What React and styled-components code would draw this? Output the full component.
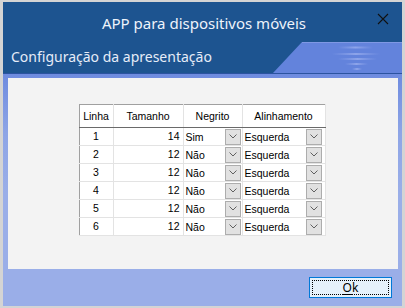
import React from "react";
import styled, { createGlobalStyle } from "styled-components";

const Global = createGlobalStyle`
  html, body { margin: 0; padding: 0; background: #ffffff; }
  * { box-sizing: border-box; }
`;

const Window = styled.div`
  width: 405px;
  height: 308px;
  display: flex;
  flex-direction: column;
  border-style: solid;
  border-color: #d4d4d4;
  border-width: 2px 3px 2px 3px;
  background: #1d5490;
  font-family: "Noto Sans", "Open Sans", sans-serif;
`;

const TitleBar = styled.div`
  height: 40px;
  display: grid;
  grid-template-columns: 1fr auto 1fr;
  align-items: center;
  background: #1d5490;
  color: #eef3fb;
  font-size: 15px;
`;

const TitleText = styled.div`
  grid-column: 2;
  padding-top: 1px;
  padding-left: 3px;
`;

const CloseButton = styled.div`
  grid-column: 3;
  justify-self: end;
  width: 12px;
  height: 12px;
  margin-right: 13px;
  margin-top: -7px;
  display: flex;
`;

const SubHeader = styled.div`
  height: 32px;
  display: flex;
  align-items: stretch;
  justify-content: space-between;
  background: #1d5490;
  border-bottom: 1px solid #2b53a0;
  color: #e6ecf8;
  font-size: 14px;
`;

const SubTitle = styled.div`
  display: flex;
  align-items: center;
  padding-left: 8px;
  padding-bottom: 3px;
`;

const Body = styled.div`
  flex: 1;
  display: flex;
  flex-direction: column;
  padding: 4px 4px 0 5px;
  background: linear-gradient(#6e8bdf 0px, #8ea5e6 60px, #9aaee8 120px, #9aaee8 100%);
`;

const Panel = styled.div`
  height: 191px;
  background: #f3f3f3;
  display: flex;
  justify-content: center;
  align-items: flex-start;
  padding-top: 26px;
  padding-right: 2px;
`;

const Footer = styled.div`
  flex: 1;
  display: flex;
  justify-content: flex-end;
  align-items: flex-start;
  padding-top: 8px;
  padding-right: 6px;
`;

const OkButton = styled.button`
  width: 83px;
  height: 21px;
  padding: 2px;
  border: 1px solid #0078d7;
  background: #e5f1fb;
  font-family: "Noto Sans", "Open Sans", sans-serif;
  font-size: 12px;
  color: #000;
  display: flex;
  cursor: default;
`;

const FocusRect = styled.span`
  flex: 1;
  border: 1px dotted #000;
  display: flex;
  align-items: center;
  justify-content: center;
  line-height: 1;
  padding-top: 1px;
`;

const AccessKey = styled.span`
  text-decoration: underline;
  text-underline-offset: 2px;
`;

const Table = styled.table`
  border-collapse: collapse;
  border: 1px solid #a0a0a0;
  background: #ffffff;
  font-family: "Liberation Sans", Arial, sans-serif;
  font-size: 10.5px;
  color: #000;
  table-layout: fixed;
`;

const HeadCell = styled.th`
  width: ${(p) => p.$w}px;
  height: 23px;
  padding: 0;
  font-weight: normal;
  text-align: center;
  border-right: 1px solid #e3e3e3;
  border-bottom: 1px solid #6a6a6a;
  white-space: nowrap;
`;

const Cell = styled.td`
  height: 18px;
  padding: 0 ${(p) => (p.$align === "right" ? 3 : 0)}px 0 0;
  text-align: ${(p) => p.$align || "center"};
  border-right: 1px solid #e3e3e3;
  border-bottom: 1px solid #e3e3e3;
  white-space: nowrap;
  line-height: 17px;
`;

const ComboCell = styled.td`
  height: 18px;
  padding: 0;
  border-right: 1px solid #e3e3e3;
  border-bottom: 1px solid #e3e3e3;
`;

const Combo = styled.div`
  display: flex;
  align-items: center;
  justify-content: space-between;
  height: 17px;
  padding: 0 ${(p) => p.$pr}px 0 2px;
`;

const ComboButton = styled.span`
  width: 16px;
  height: 16px;
  background: #e1e1e1;
  border: 1px solid #adadad;
  display: flex;
  align-items: center;
  justify-content: center;
`;

const Chevron = () => (
  <svg width="8" height="5" viewBox="0 0 8 5">
    <path d="M0.5 0.5 L4 4 L7.5 0.5" fill="none" stroke="#606060" strokeWidth="1" />
  </svg>
);

const Decoration = () => (
  <svg width="129" height="31" viewBox="0 0 129 31" style={{ display: "block" }}>
    <defs>
      <linearGradient id="stripe" x1="0" x2="1" y1="0" y2="0">
        <stop offset="0" stopColor="#8ea4ea" stopOpacity="0" />
        <stop offset="0.5" stopColor="#95aaec" stopOpacity="0.85" />
        <stop offset="1" stopColor="#8ea4ea" stopOpacity="0" />
      </linearGradient>
    </defs>
    <polygon points="29,0 129,0 129,31 0,31" fill="#6383dc" />
    <line x1="29" y1="0.5" x2="129" y2="0.5" stroke="#7f98e4" />
    <rect x="65" y="4.5" width="35" height="2" fill="url(#stripe)" />
    <rect x="59" y="11" width="48" height="2" fill="url(#stripe)" />
    <rect x="65" y="16" width="39" height="2" fill="url(#stripe)" />
    <rect x="72" y="21" width="23" height="2" fill="url(#stripe)" />
    <rect x="79" y="26" width="10" height="2" fill="url(#stripe)" />
  </svg>
);

const rows = [
  { n: 1, size: 14, bold: "Sim", align: "Esquerda" },
  { n: 2, size: 12, bold: "Não", align: "Esquerda" },
  { n: 3, size: 12, bold: "Não", align: "Esquerda" },
  { n: 4, size: 12, bold: "Não", align: "Esquerda" },
  { n: 5, size: 12, bold: "Não", align: "Esquerda" },
  { n: 6, size: 12, bold: "Não", align: "Esquerda" },
];

export default function App() {
  return (
    <>
      <Global />
      <Window>
        <TitleBar>
          <TitleText>APP para dispositivos móveis</TitleText>
          <CloseButton>
            <svg width="12" height="12" viewBox="0 0 12 12">
              <path d="M1 1 L11 11 M11 1 L1 11" stroke="#111" strokeWidth="1.1" />
            </svg>
          </CloseButton>
        </TitleBar>
        <SubHeader>
          <SubTitle>Configuração da apresentação</SubTitle>
          <Decoration />
        </SubHeader>
        <Body>
          <Panel>
            <Table>
              <thead>
                <tr>
                  <HeadCell $w={34}>Linha</HeadCell>
                  <HeadCell $w={70}>Tamanho</HeadCell>
                  <HeadCell $w={59}>Negrito</HeadCell>
                  <HeadCell $w={83}>Alinhamento</HeadCell>
                </tr>
              </thead>
              <tbody>
                {rows.map((r) => (
                  <tr key={r.n}>
                    <Cell>{r.n}</Cell>
                    <Cell $align="right">{r.size}</Cell>
                    <ComboCell>
                      <Combo $pr={1}>
                        <span>{r.bold}</span>
                        <ComboButton>
                          <Chevron />
                        </ComboButton>
                      </Combo>
                    </ComboCell>
                    <ComboCell>
                      <Combo $pr={3}>
                        <span>{r.align}</span>
                        <ComboButton>
                          <Chevron />
                        </ComboButton>
                      </Combo>
                    </ComboCell>
                  </tr>
                ))}
              </tbody>
            </Table>
          </Panel>
          <Footer>
            <OkButton>
              <FocusRect>
                <AccessKey>O</AccessKey>k
              </FocusRect>
            </OkButton>
          </Footer>
        </Body>
      </Window>
    </>
  );
}
